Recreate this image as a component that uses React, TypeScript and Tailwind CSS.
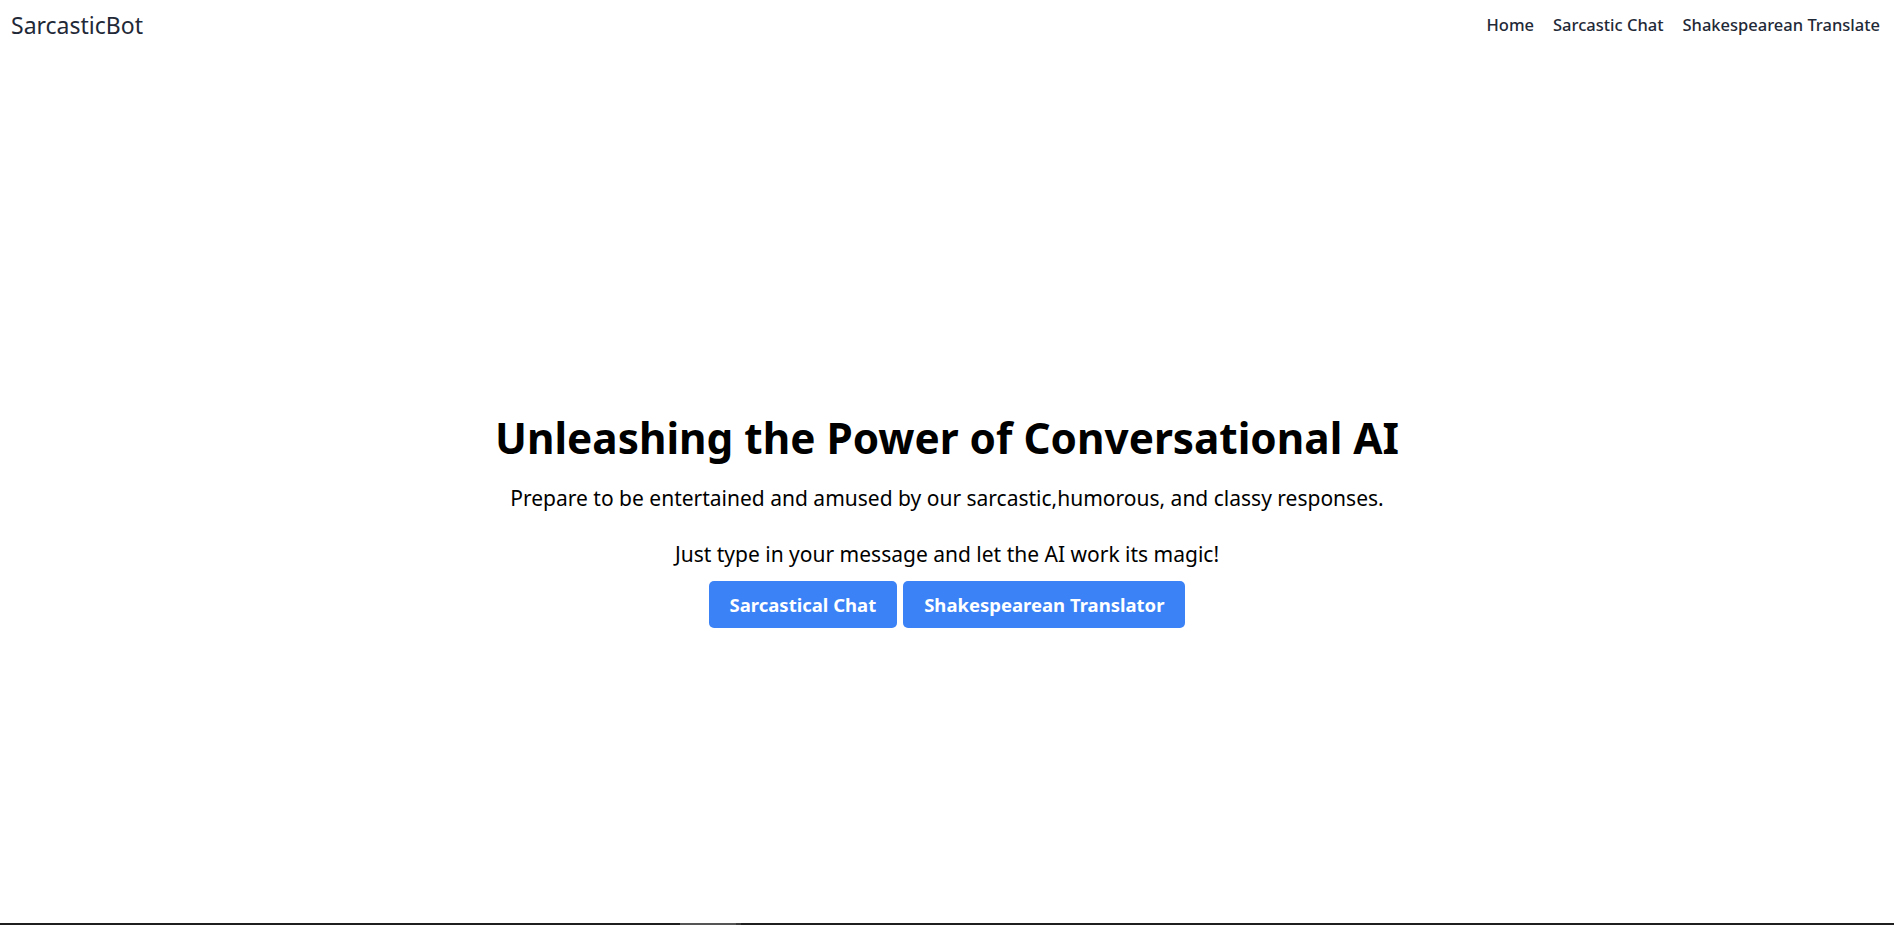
const font = { fontFamily: '"Noto Sans", "Open Sans", sans-serif' }

export default function App() {
  return (
    <div className="flex h-[925px] flex-col bg-white" style={font}>
      <nav className="flex h-[50px] items-center justify-between pl-[11px] pr-[14px] text-[#1f2937]">
        <a href="#" className="text-[23px] leading-none">
          SarcasticBot
        </a>
        <ul className="flex gap-[19px] text-[16.5px] font-medium">
          <li>
            <a href="#">Home</a>
          </li>
          <li>
            <a href="#">Sarcastic Chat</a>
          </li>
          <li>
            <a href="#">Shakespearean Translate</a>
          </li>
        </ul>
      </nav>

      <main className="flex flex-1 flex-col items-center pt-[362px] text-center text-black">
        <h1 className="text-[42.3px] font-bold leading-[52px]">Unleashing the Power of Conversational AI</h1>
        <p className="mt-[19px] text-[21px] leading-[30px]">
          Prepare to be entertained and amused by our sarcastic,humorous, and classy responses.
        </p>
        <p className="mt-[26px] text-[21px] leading-[30px]">Just type in your message and let the AI work its magic!</p>
        <div className="mt-[12px] flex gap-[6px]">
          <button className="h-[47px] rounded-[5px] bg-[#3b82f6] px-[21px] text-[18.5px] font-bold text-white">
            Sarcastical Chat
          </button>
          <button className="h-[47px] rounded-[5px] bg-[#3b82f6] px-[21px] text-[18.5px] font-bold text-white">
            Shakespearean Translator
          </button>
        </div>
      </main>

      <div className="flex h-[2px] bg-[#1f1f1f]">
        <div className="ml-[680px] w-[56px] bg-[#555555]" />
        <div className="w-[5px] bg-[#3a3a3a]" />
      </div>
    </div>
  )
}
